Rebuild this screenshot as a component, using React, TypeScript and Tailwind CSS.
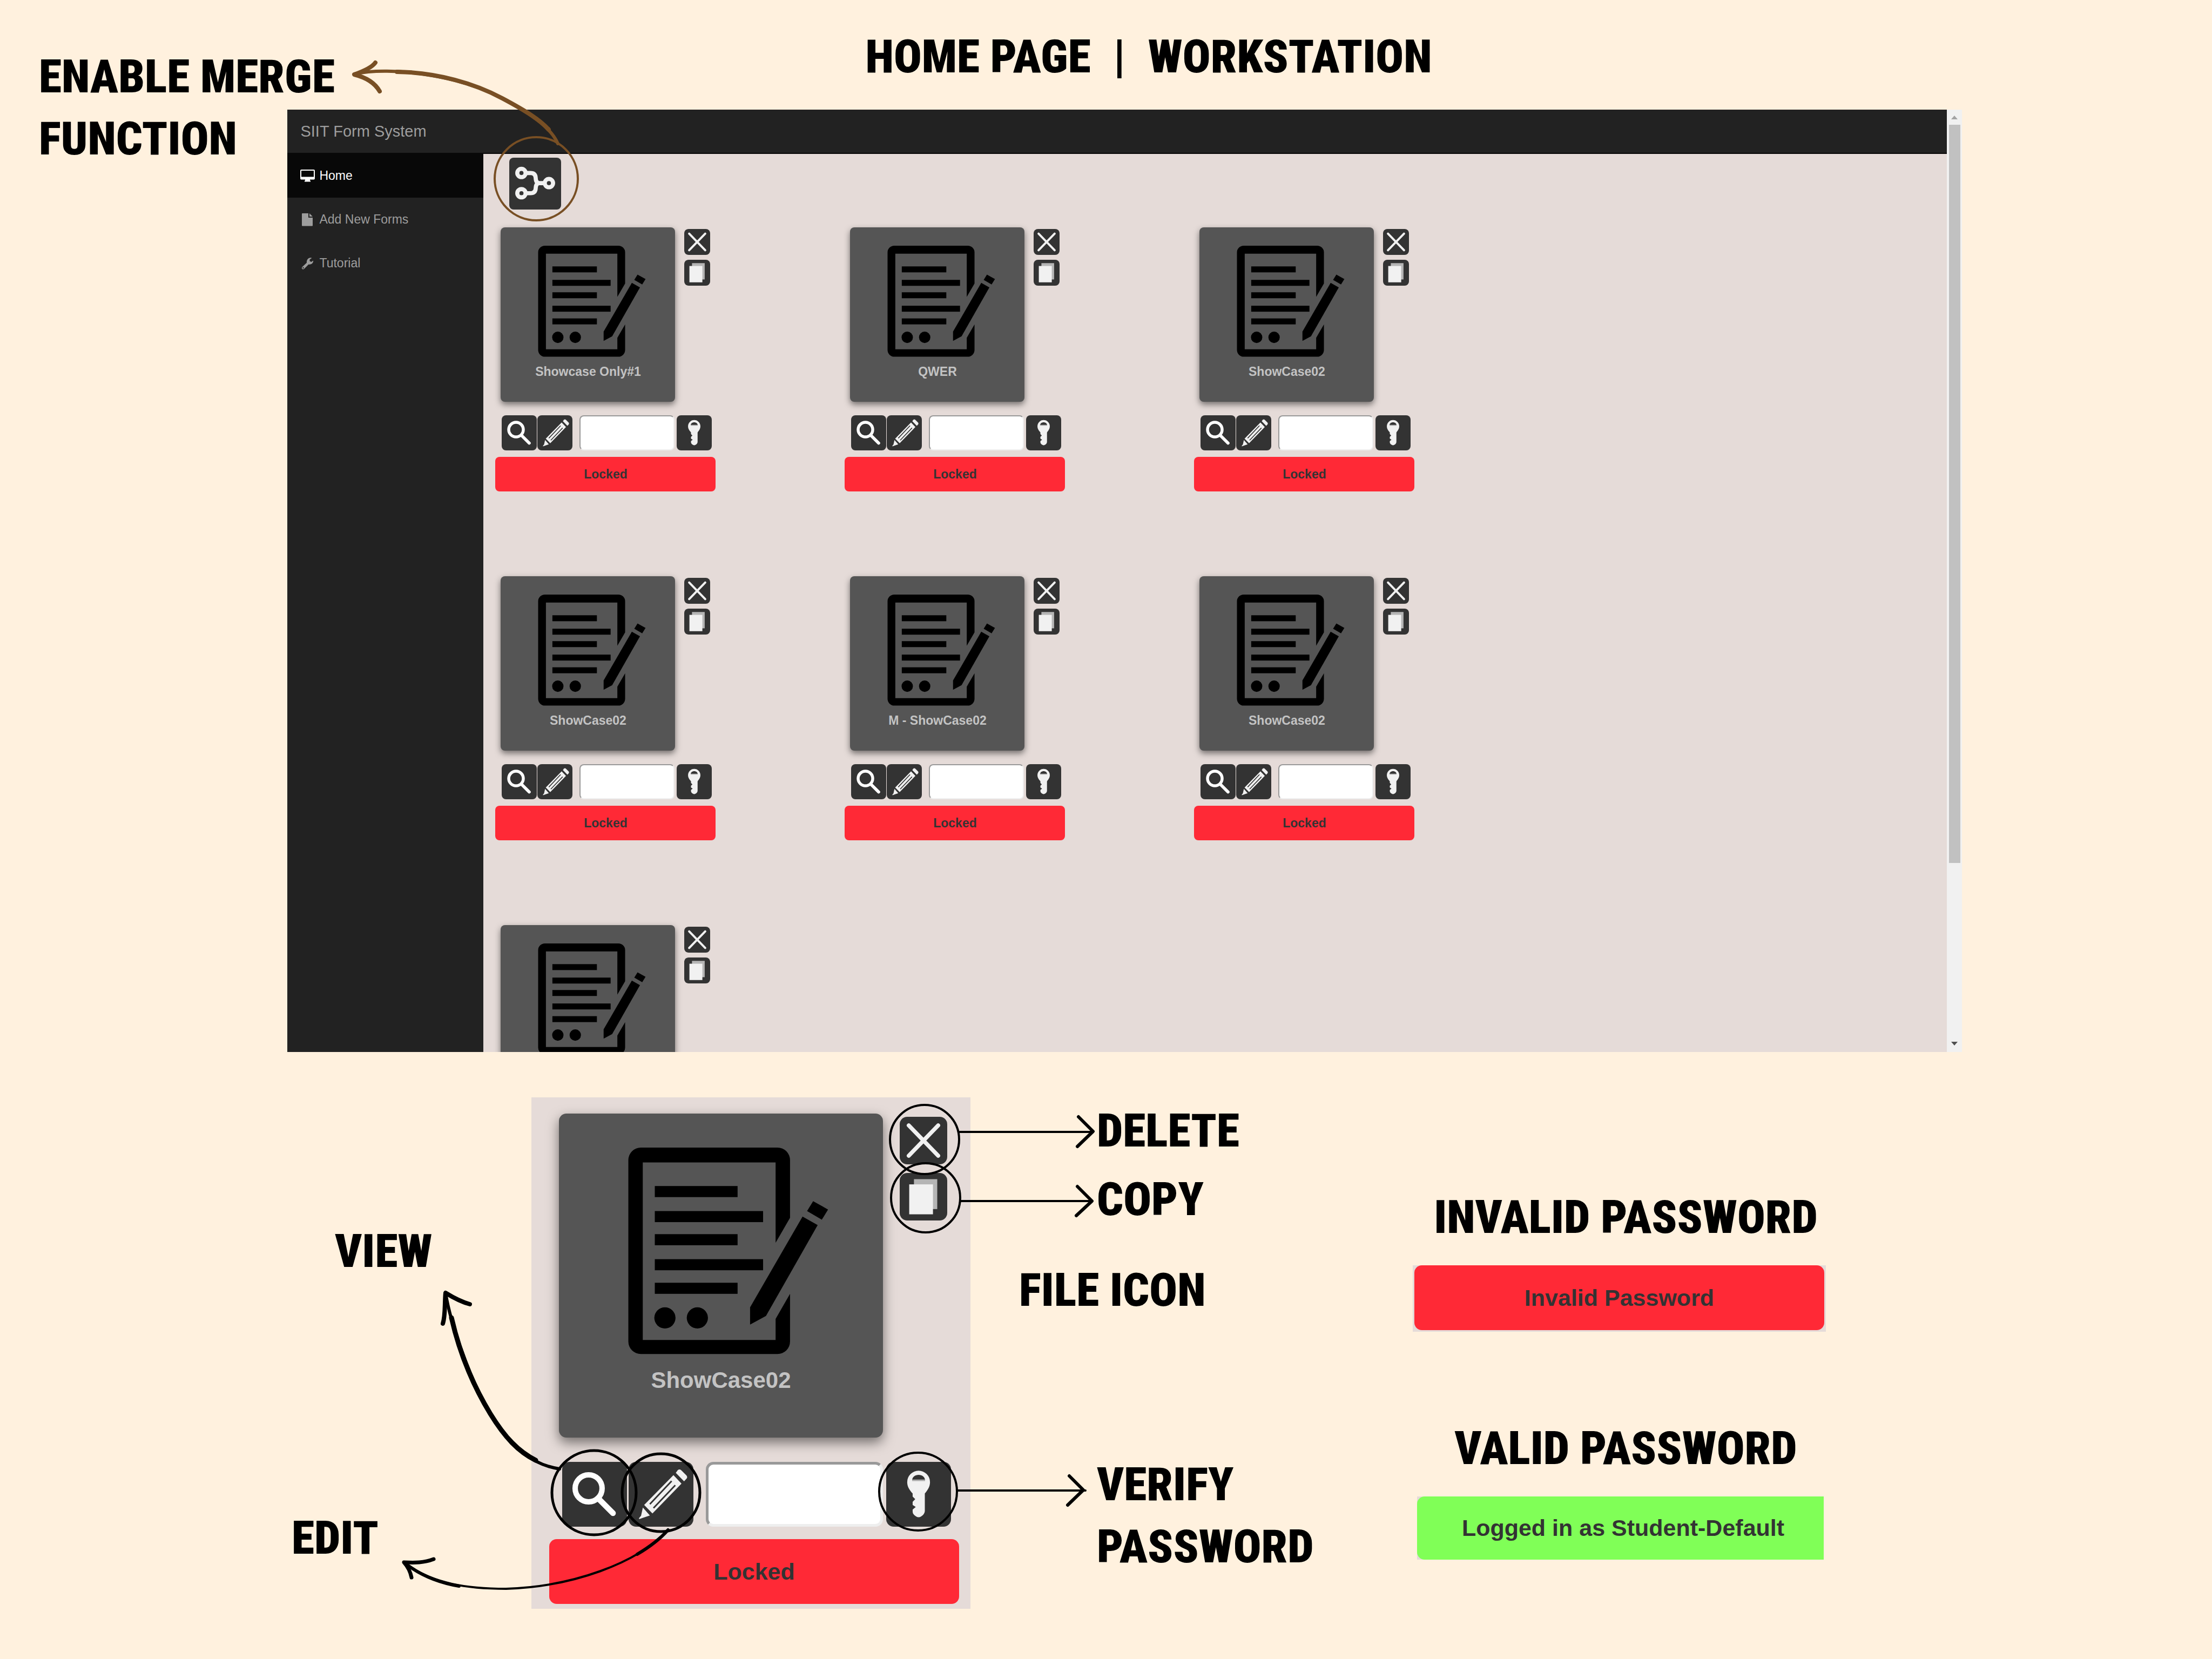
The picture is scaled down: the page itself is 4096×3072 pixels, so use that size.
import React from 'react';

type Size = 'sm' | 'lg';

const labelText =
  "font-['Roboto_Condensed','Roboto',sans-serif] font-black text-[86px] leading-[115px] whitespace-nowrap text-black";

const styles = {
  sm: {
    root: 'w-[408px]',
    card: 'ml-[10px] size-[323px] rounded-lg pt-[33px] shadow-[0_5px_12px_rgba(0,0,0,0.5)]',
    art: 'w-[216px] h-[208px]',
    title: 'mt-[10px] text-[23px] leading-[32px]',
    side: 'ml-[17px] mt-[3px] gap-[9px]',
    sideButton: 'size-[48px] rounded-lg',
    tools: 'mt-[25px] ml-[12px]',
    tool: 'size-[65px] rounded-lg',
    edit: 'ml-[1px]',
    input: 'ml-[13px] mr-[4px] w-[176px] h-[65px] rounded-lg border-2 px-3 text-[23px]',
    bar: 'mt-[12px] h-[64px] rounded-lg text-[23px]',
  },
  lg: {
    root: 'w-[759px]',
    card: 'ml-[18px] size-[600px] rounded-[14px] pt-[61px] shadow-[0_9px_22px_rgba(0,0,0,0.5)]',
    art: 'w-[401px] h-[387px]',
    title: 'mt-[16px] text-[42px] leading-[60px]',
    side: 'ml-[31px] mt-[6px] gap-[16px]',
    sideButton: 'size-[88px] rounded-[14px]',
    tools: 'mt-[45px] ml-[24px]',
    tool: 'size-[120px] rounded-[14px]',
    edit: 'ml-[3px]',
    input: 'ml-[23px] mr-[6px] w-[328px] h-[120px] rounded-[14px] border-[5px] px-6 text-[42px]',
    bar: 'mt-[23px] h-[120px] rounded-[14px] text-[43px]',
  },
};

function FormArt({ className }: { className: string }) {
  return (
    <svg viewBox="82 73 225 217" className={className} fill="#000" aria-hidden="true">
      <path
        fillRule="evenodd"
        d="M111 74H253A13 13 0 0 1 266 87V147L251 173V89.500H113V274H251V252L266 226V275.500A13 13 0 0 1 253 288.500H111A13 13 0 0 1 98 275.500V87A13 13 0 0 1 111 74Z"
      />
      <rect x="125.500" y="114" width="86" height="11.500" />
      <rect x="125.500" y="140" width="112.500" height="11.500" />
      <rect x="125.500" y="164" width="86" height="11.500" />
      <rect x="125.500" y="190" width="112.500" height="11.500" />
      <rect x="125.500" y="214.500" width="86" height="11.500" />
      <circle cx="136" cy="251" r="11" />
      <circle cx="169.700" cy="251" r="11" />
      <path d="M279 145.700L294.700 154.600L241 249L224.500 258V240Z" />
      <path d="M290 129.800L305.500 138.400L299 149L283.700 140Z" />
    </svg>
  );
}

function DeleteIcon() {
  return (
    <svg viewBox="0 0 50 50" className="size-full" aria-hidden="true">
      <path d="M9.500 9L40.500 41M40.500 9L9.500 41" stroke="#f1f1f1" strokeWidth="4.200" strokeLinecap="round" />
    </svg>
  );
}

function CopyIcon() {
  return (
    <svg viewBox="0 0 50 50" className="size-full" aria-hidden="true">
      <rect x="15" y="6.500" width="24.500" height="31.500" fill="#b5b5b5" />
      <rect x="10" y="12" width="25" height="31.500" fill="#f1f1f1" />
    </svg>
  );
}

function SearchIcon() {
  return (
    <svg viewBox="0 0 125 125" className="size-full" fill="none" stroke="#fff" aria-hidden="true">
      <circle cx="51" cy="51" r="26" strokeWidth="10.500" />
      <path d="M72 73L98 99" strokeWidth="11" strokeLinecap="round" />
    </svg>
  );
}

function PencilIcon() {
  return (
    <svg viewBox="0 0 125 125" className="size-full" fill="#f1f1f1" aria-hidden="true">
      <path d="M91 21L95 16Q97.500 13.500 101 15.500L111.500 26Q114 29 112 32L107 37.500Z" />
      <path d="M86.500 25.500L102 42L46 99.500L30 83Z" />
      <path d="M27.500 88L41 103.500L27 108L20.500 110.500L20 108.500L24 104Z" />
      <path d="M83 37L41 81.500M90 45L48 89" stroke="#333" strokeWidth="3" />
    </svg>
  );
}

function KeyIcon() {
  return (
    <svg viewBox="0 0 125 125" className="size-full" fill="#f1f1f1" aria-hidden="true">
      <path
        fillRule="evenodd"
        d="M62.500 17A22 22 0 0 1 84.500 39C84.500 48 80 54 74.500 61V95Q74 101 67 105.500Q62.500 108 58 105.500Q51 101 51 96V92L57 87L51 83V77L56 72L51 67V61C45 54 40.500 48 40.500 39A22 22 0 0 1 62.500 17ZM50 36H75C75 29 69 25 62.500 25S50 29 50 36Z"
      />
      <rect x="50" y="34" width="25" height="3" fill="#aaa" />
    </svg>
  );
}

function MergeIcon() {
  return (
    <svg viewBox="0 0 100 100" className="size-full" fill="none" stroke="#f1f1f1" strokeWidth="8" aria-hidden="true">
      <circle cx="23.500" cy="29.500" r="8" />
      <circle cx="23.500" cy="68.500" r="8" />
      <circle cx="76.500" cy="49" r="8" />
      <path d="M31 29.500H41Q50.500 29.500 51 39Q51.500 49 58 49H69M31 68.500H41Q50.500 68.500 51 59Q51.500 49 58 49" />
    </svg>
  );
}

function FormCard({ title, status, size }: { title?: string; status?: string; size: Size }) {
  const s = styles[size];
  const dark = 'shrink-0 bg-[#333333]';
  return (
    <article className={`${s.root} font-['Liberation_Sans',Arial,sans-serif]`}>
      <div className="flex items-start">
        <button type="button" aria-label={title ?? 'Form'} className={`${s.card} flex shrink-0 flex-col items-center bg-[#555555]`}>
          <FormArt className={s.art} />
          {title && <span className={`${s.title} font-bold text-[#c3c3c3]`}>{title}</span>}
        </button>
        <div className={`${s.side} flex flex-col`}>
          <button type="button" aria-label="Delete" className={`${s.sideButton} ${dark}`}><DeleteIcon /></button>
          <button type="button" aria-label="Copy" className={`${s.sideButton} ${dark}`}><CopyIcon /></button>
        </div>
      </div>
      {status && (
        <>
          <div className={`${s.tools} flex`}>
            <button type="button" aria-label="View" className={`${s.tool} ${dark}`}><SearchIcon /></button>
            <button type="button" aria-label="Edit" className={`${s.tool} ${s.edit} ${dark}`}><PencilIcon /></button>
            <input
              type="password"
              aria-label={`Password for ${title}`}
              className={`${s.input} shrink-0 border-t-[#999999] border-r-[#eeeeee] border-b-[#eeeeee] border-l-[#999999] bg-white`}
            />
            <button type="button" aria-label="Verify password" className={`${s.tool} ${dark}`}><KeyIcon /></button>
          </div>
          <div className={`${s.bar} flex items-center justify-center bg-[#ff2936] font-bold text-[#333333]`}>{status}</div>
        </>
      )}
    </article>
  );
}

function DesktopIcon() {
  return (
    <svg viewBox="0 0 27 23" className="h-[23px] w-[27px]" aria-hidden="true">
      <path fill="currentColor" fillRule="evenodd" d="M2 0H25Q27 0 27 2V16.500Q27 18.500 25 18.500H18V20.500H19V22.500H8V20.500H9V18.500H2Q0 18.500 0 16.500V2Q0 0 2 0ZM2 2V13.500H25V2Z" />
    </svg>
  );
}

function FileIcon() {
  return (
    <svg viewBox="0 0 27 24" className="h-[24px] w-[27px]" aria-hidden="true">
      <path fill="currentColor" d="M4 0H15V8H23V22.500Q23 23.500 22 23.500H4Q3 23.500 3 22.500V1Q3 0 4 0ZM17 0L23 6H17Z" />
    </svg>
  );
}

function WrenchIcon() {
  return (
    <svg viewBox="0 0 27 24" className="h-[24px] w-[27px]" aria-hidden="true">
      <path
        fill="currentColor"
        d="M3.500 18.500L12 10.500C11.500 5.500 14.500 1 19.500 1.200L21.500 1.800L17.500 4.500V7.500L20.500 9L24 6.500C24.500 11 20.500 14.500 15.500 13.500L7 22Q5 23.500 3.500 22Q1.800 20.200 3.500 18.500Z"
      />
      <circle cx="5.500" cy="20" r="1.200" fill="#222222" />
    </svg>
  );
}

const menu = [
  { label: 'Home', icon: <DesktopIcon />, active: true },
  { label: 'Add New Forms', icon: <FileIcon />, active: false },
  { label: 'Tutorial', icon: <WrenchIcon />, active: false },
];

const forms: { title?: string; status?: string }[] = [
  { title: 'Showcase Only#1', status: 'Locked' },
  { title: 'QWER', status: 'Locked' },
  { title: 'ShowCase02', status: 'Locked' },
  { title: 'ShowCase02', status: 'Locked' },
  { title: 'M - ShowCase02', status: 'Locked' },
  { title: 'ShowCase02', status: 'Locked' },
  {},
];

function Workstation() {
  return (
    <div className="ml-[13%] mr-[11.3%] flex h-[1745px] overflow-hidden font-['Liberation_Sans',Arial,sans-serif]">
      <div className="flex min-w-0 flex-1 flex-col">
        <nav className="flex h-[82px] shrink-0 items-center border-b-2 border-[#080808] bg-[#222222] pl-[24px]">
          <a href="#" className="text-[29px] leading-[40px] text-[#9d9d9d]">SIIT Form System</a>
        </nav>
        <div className="flex min-h-0 flex-1">
          <aside className="w-[363px] shrink-0 bg-[#222222]">
            <ul>
              {menu.map((item) => (
                <li key={item.label}>
                  <a
                    href="#"
                    className={`flex h-[81px] items-center gap-[8px] pl-[24px] text-[23px] ${item.active ? 'bg-[#080808] text-white' : 'text-[#9d9d9d]'}`}
                  >
                    {item.icon}
                    {item.label}
                  </a>
                </li>
              ))}
            </ul>
          </aside>
          <main className="min-w-0 flex-1 overflow-hidden bg-[#e5dbd8] pt-[7px] pl-[22px]">
            <button type="button" aria-label="Enable merge" className="ml-[26px] block size-[96px] rounded-lg bg-[#333333]">
              <MergeIcon />
            </button>
            <div className="mt-[33px] grid auto-rows-[646px] grid-cols-[repeat(3,647px)]">
              {forms.map((form, i) => (
                <FormCard key={i} title={form.title} status={form.status} size="sm" />
              ))}
            </div>
          </main>
        </div>
      </div>
      <div className="flex w-[28px] shrink-0 flex-col items-center bg-[#f1f1f1]">
        <svg viewBox="0 0 12 7" className="mt-[11px] h-[7px] w-[12px]" aria-hidden="true"><path d="M6 0L12 7H0Z" fill="#a3a3a3" /></svg>
        <div className="mt-[10px] h-[1367px] w-[21px] bg-[#c1c1c1]" />
        <svg viewBox="0 0 12 7" className="mt-auto mb-[12px] h-[7px] w-[12px]" aria-hidden="true"><path d="M0 0H12L6 7Z" fill="#505050" /></svg>
      </div>
    </div>
  );
}

function Annotations() {
  return (
    <svg
      viewBox="0 0 4096 3072"
      className="pointer-events-none absolute inset-0 h-full w-full"
      fill="none"
      strokeLinecap="round"
      strokeLinejoin="round"
      aria-hidden="true"
    >
      <g stroke="#784f24">
        <circle cx="993" cy="331" r="77" strokeWidth="4" />
        <path d="M656 137C725 122 850 140 930 182C990 214 1022 240 1033 266" strokeWidth="6" />
        <path d="M735 133C810 134 880 155 930 182C975 206 1000 222 1016 240" strokeWidth="8" />
        <path d="M695 116C688 126 670 133 656 138C680 144 695 155 703 169" strokeWidth="8" />
      </g>
      <g stroke="#000">
        <circle cx="1712" cy="2110" r="64" strokeWidth="4" />
        <circle cx="1714" cy="2218" r="64" strokeWidth="4" />
        <circle cx="1100" cy="2764" r="78" strokeWidth="5" />
        <circle cx="1224" cy="2764" r="72" strokeWidth="5" />
        <circle cx="1700" cy="2762" r="72" strokeWidth="4" />
        <path d="M1777 2096H2024M1779 2224H2022M1773 2760H2010" strokeWidth="4" />
        <path d="M1997 2068L2024 2095L1995 2123M1995 2197L2022 2224L1993 2251M1980 2733L2006 2759L1977 2787" strokeWidth="6" />
        <path d="M825 2394C834 2450 870 2555 908 2618C948 2682 985 2712 1036 2720" strokeWidth="6" />
        <path d="M836 2440C852 2510 880 2572 908 2618C935 2662 960 2688 992 2704" strokeWidth="9" />
        <path d="M870 2415C855 2411 838 2402 825 2394C823 2415 825 2435 820 2451" strokeWidth="8" />
        <path d="M748 2893C800 2934 870 2942 937 2942C1060 2938 1180 2895 1237 2833" strokeWidth="4" />
        <path d="M748 2893C780 2919 815 2931 850 2937M1180 2878C1202 2865 1222 2850 1237 2833" strokeWidth="6" />
        <path d="M803 2887C785 2894 768 2894 748 2893C756 2902 760 2911 762 2921" strokeWidth="7" />
      </g>
    </svg>
  );
}

export default function App() {
  return (
    <div className="relative min-h-screen overflow-hidden bg-[#fff1de]">
      <header className="h-[203px] pt-[47px] pl-[158px]">
        <h1 className={`${labelText} flex justify-center gap-[42px]`}>
          <span>HOME PAGE</span>
          <span>|</span>
          <span>WORKSTATION</span>
        </h1>
      </header>
      <p className={`${labelText} absolute top-[84px] left-[72px]`}>
        ENABLE MERGE
        <br />
        FUNCTION
      </p>

      <Workstation />

      <section className="mt-[84px] grid grid-cols-[984fr_813px_819fr_1480fr] items-start">
        <div>
          <p className={`${labelText} mt-[227px] pl-[620px]`}>VIEW</p>
          <p className={`${labelText} mt-[416px] pl-[540px]`}>EDIT</p>
        </div>

        <div className="bg-[#e5dbd8] pt-[30px] pb-[9px] pl-[33px]">
          <FormCard title="ShowCase02" status="Locked" size="lg" />
        </div>

        <div>
          <p className={`${labelText} mt-[4px] pl-[234px]`}>DELETE</p>
          <p className={`${labelText} mt-[12px] pl-[234px]`}>COPY</p>
          <p className={`${labelText} mt-[53px] pl-[90px]`}>FILE ICON</p>
          <p className={`${labelText} mt-[245px] pl-[234px]`}>
            VERIFY
            <br />
            PASSWORD
          </p>
        </div>

        <div className="w-[765px] font-['Liberation_Sans',Arial,sans-serif]">
          <h2 className={`${labelText} mt-[164px] pl-[24px] text-center`}>INVALID PASSWORD</h2>
          <div className="mt-[32px] bg-[#e5dbd8] px-[3px] pb-[3px]">
            <div className="flex h-[120px] items-center justify-center rounded-[14px] bg-[#ff2936] text-[43px] font-bold text-[#333333]">
              Invalid Password
            </div>
          </div>
          <h2 className={`${labelText} mt-[158px] pl-[24px] text-center`}>VALID PASSWORD</h2>
          <div className="mt-[32px] mr-[4px] ml-[8px] bg-[#e5dbd8]">
            <div className="flex h-[117px] items-center justify-center rounded-l-[14px] bg-[#80ff57] pl-[10px] text-[43px] font-bold text-[#333333]">
              Logged in as Student-Default
            </div>
          </div>
        </div>
      </section>

      <Annotations />
    </div>
  );
}
